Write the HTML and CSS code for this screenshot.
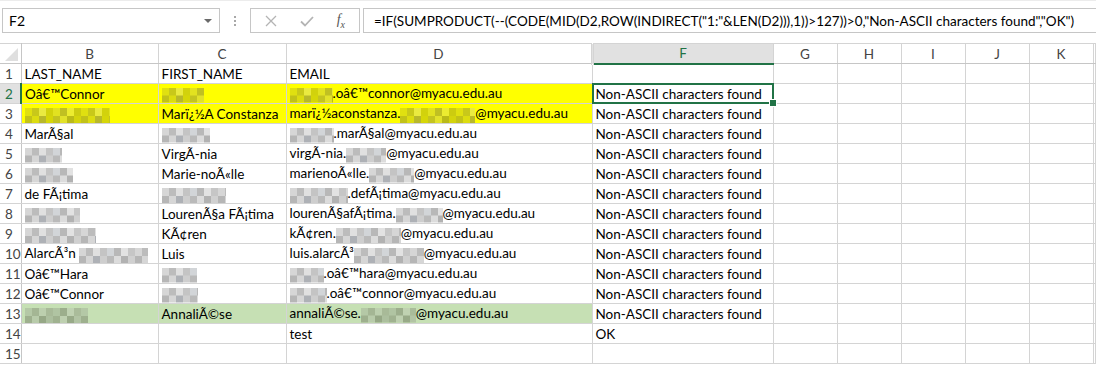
FILE: index.html
```html
<!DOCTYPE html>
<html lang="en">
<head>
    <meta charset="UTF-8">
    <title>Book1 - Excel</title>
    <link rel="stylesheet" href="styles.css">
</head>
<body>
    <div class="formula-row">
        <div class="name-box">
            <span>F2</span>
            <span class="caret"></span>
        </div>
        <div class="grip">
            <span></span><span></span><span></span>
        </div>
        <div class="fx-buttons">
            <svg width="12" height="12" viewBox="0 0 12 12"><path d="M1 1L11 11M11 1L1 11" stroke="#b4b4b4" stroke-width="1.3"/></svg>
            <svg width="14" height="12" viewBox="0 0 14 12"><path d="M1 6.5L5 10.5L13 2" stroke="#b4b4b4" stroke-width="1.8" fill="none"/></svg>
            <span class="fx">f<sub>x</sub></span>
        </div>
        <div class="formula">=IF(SUMPRODUCT(--(CODE(MID(D2,ROW(INDIRECT("1:"&amp;LEN(D2))),1))&gt;127))&gt;0,"Non-ASCII characters found","OK")</div>
    </div>

    <table class="sheet">
        <colgroup>
            <col style="width: 21px">
            <col style="width: 137px">
            <col style="width: 128px">
            <col style="width: 306px">
            <col style="width: 181px">
            <col style="width: 64px">
            <col style="width: 64px">
            <col style="width: 64px">
            <col style="width: 64px">
            <col style="width: 64px">
            <col>
        </colgroup>
        <thead>
            <tr>
                <th class="corner"><svg width="13" height="13" viewBox="0 0 13 13"><polygon points="13,0 13,13 0,13" fill="#dfdfdf"/></svg></th>
                <th>B</th>
                <th>C</th>
                <th class="hidden-after">D</th>
                <th class="col-active">F</th>
                <th>G</th>
                <th>H</th>
                <th>I</th>
                <th>J</th>
                <th>K</th>
                <th></th>
            </tr>
        </thead>
        <tbody>
            <tr>
                <td class="rh">1</td>
                <td>LAST_NAME</td><td>FIRST_NAME</td><td>EMAIL</td><td></td>
                <td></td><td></td><td></td><td></td><td></td><td></td>
            </tr>
            <tr class="yellow">
                <td class="rh row-active">2</td>
                <td>Oâ€™Connor</td>
                <td><span class="blur" style="width: 42px"></span></td>
                <td><span class="blur" style="width: 43px"></span>.oâ€™connor@myacu.edu.au</td>
                <td class="active">Non-ASCII characters found</td>
                <td></td><td></td><td></td><td></td><td></td><td></td>
            </tr>
            <tr class="yellow">
                <td class="rh">3</td>
                <td><span class="blur" style="width: 85px"></span></td>
                <td>Marï¿½A Constanza</td>
                <td>marï¿½aconstanza.<span class="blur" style="width: 75px"></span>@myacu.edu.au</td>
                <td>Non-ASCII characters found</td>
                <td></td><td></td><td></td><td></td><td></td><td></td>
            </tr>
            <tr>
                <td class="rh">4</td>
                <td>MarÃ§al</td>
                <td><span class="blur" style="width: 48px"></span></td>
                <td><span class="blur" style="width: 44px"></span>.marÃ§al@myacu.edu.au</td>
                <td>Non-ASCII characters found</td>
                <td></td><td></td><td></td><td></td><td></td><td></td>
            </tr>
            <tr>
                <td class="rh">5</td>
                <td><span class="blur" style="width: 37px"></span></td>
                <td>VirgÃ-nia</td>
                <td>virgÃ-nia.<span class="blur" style="width: 40px"></span>@myacu.edu.au</td>
                <td>Non-ASCII characters found</td>
                <td></td><td></td><td></td><td></td><td></td><td></td>
            </tr>
            <tr>
                <td class="rh">6</td>
                <td><span class="blur" style="width: 48px"></span></td>
                <td>Marie-noÃ«lle</td>
                <td>marienoÃ«lle.<span class="blur" style="width: 45px"></span>@myacu.edu.au</td>
                <td>Non-ASCII characters found</td>
                <td></td><td></td><td></td><td></td><td></td><td></td>
            </tr>
            <tr>
                <td class="rh">7</td>
                <td>de FÃ¡tima</td>
                <td><span class="blur" style="width: 64px"></span></td>
                <td><span class="blur" style="width: 58px"></span>.defÃ¡tima@myacu.edu.au</td>
                <td>Non-ASCII characters found</td>
                <td></td><td></td><td></td><td></td><td></td><td></td>
            </tr>
            <tr>
                <td class="rh">8</td>
                <td><span class="blur" style="width: 55px"></span></td>
                <td>LourenÃ§a FÃ¡tima</td>
                <td>lourenÃ§afÃ¡tima.<span class="blur" style="width: 47px"></span>@myacu.edu.au</td>
                <td>Non-ASCII characters found</td>
                <td></td><td></td><td></td><td></td><td></td><td></td>
            </tr>
            <tr>
                <td class="rh">9</td>
                <td><span class="blur" style="width: 71px"></span></td>
                <td>KÃ¢ren</td>
                <td>kÃ¢ren.<span class="blur" style="width: 65px"></span>@myacu.edu.au</td>
                <td>Non-ASCII characters found</td>
                <td></td><td></td><td></td><td></td><td></td><td></td>
            </tr>
            <tr>
                <td class="rh">10</td>
                <td>AlarcÃ³n <span class="blur" style="width: 69px"></span></td>
                <td>Luis</td>
                <td>luis.alarcÃ³<span class="blur" style="width: 70px"></span>@myacu.edu.au</td>
                <td>Non-ASCII characters found</td>
                <td></td><td></td><td></td><td></td><td></td><td></td>
            </tr>
            <tr>
                <td class="rh">11</td>
                <td>Oâ€™Hara</td>
                <td><span class="blur" style="width: 35px"></span></td>
                <td><span class="blur" style="width: 34px"></span>.oâ€™hara@myacu.edu.au</td>
                <td>Non-ASCII characters found</td>
                <td></td><td></td><td></td><td></td><td></td><td></td>
            </tr>
            <tr>
                <td class="rh">12</td>
                <td>Oâ€™Connor</td>
                <td><span class="blur" style="width: 36px"></span></td>
                <td><span class="blur" style="width: 37px"></span>.oâ€™connor@myacu.edu.au</td>
                <td>Non-ASCII characters found</td>
                <td></td><td></td><td></td><td></td><td></td><td></td>
            </tr>
            <tr class="green">
                <td class="rh">13</td>
                <td><span class="blur" style="width: 63px"></span></td>
                <td>AnnaliÃ©se</td>
                <td>annaliÃ©se.<span class="blur" style="width: 55px"></span>@myacu.edu.au</td>
                <td>Non-ASCII characters found</td>
                <td></td><td></td><td></td><td></td><td></td><td></td>
            </tr>
            <tr>
                <td class="rh">14</td>
                <td></td><td></td><td>test</td><td>OK</td>
                <td></td><td></td><td></td><td></td><td></td><td></td>
            </tr>
            <tr>
                <td class="rh">15</td>
                <td></td><td></td><td></td><td></td>
                <td></td><td></td><td></td><td></td><td></td><td></td>
            </tr>
        </tbody>
    </table>
</body>
</html>
```

FILE: styles.css
```css
* {
    margin: 0;
    padding: 0;
    box-sizing: border-box;
}

:root {
    --grid-color: #d4d4d4;
    --header-line: #c6c6c6;
    --excel-green: #217346;
    --text-color: #000;
}

body {
    width: 1096px;
    height: 368px;
    overflow: hidden;
    background: #fff;
    font-family: 'Lato', 'Open Sans', sans-serif;
    font-size: 13.5px;
    color: var(--text-color);
    border-top: 1px solid #ececec;
}

/* formula bar */

.formula-row {
    display: flex;
    align-items: center;
    height: 42px;
    padding-top: 7px;
    padding-bottom: 10px;
    padding-left: 2px;
}

.name-box {
    width: 218px;
    height: 25px;
    border: 1px solid var(--header-line);
    display: flex;
    align-items: center;
    justify-content: space-between;
    padding: 0 7px 0 6px;
    font-size: 14px;
}

.caret {
    width: 0;
    height: 0;
    border-left: 4px solid transparent;
    border-right: 4px solid transparent;
    border-top: 4px solid #6a6a6a;
}

.grip {
    width: 30px;
    display: flex;
    flex-direction: column;
    align-items: center;
    gap: 2px;
}

.grip span {
    width: 2px;
    height: 2px;
    background: #a8a8a8;
}

.fx-buttons {
    width: 110px;
    height: 25px;
    border: 1px solid var(--header-line);
    display: flex;
    align-items: center;
    justify-content: space-between;
    padding: 0 14px 0 14px;
}

.fx {
    font-family: 'Liberation Serif', serif;
    font-style: italic;
    font-size: 14px;
    color: #555;
}

.fx sub {
    font-size: 10px;
}

.formula {
    flex: 1;
    height: 25px;
    margin-left: 3px;
    border: 1px solid var(--header-line);
    border-right: none;
    padding-left: 10px;
    display: flex;
    align-items: center;
    font-size: 13.5px;
    white-space: nowrap;
    overflow: hidden;
}

/* grid */

.sheet {
    border-collapse: collapse;
    table-layout: fixed;
    width: 1096px;
}

.sheet th {
    height: 20px;
    font-weight: normal;
    color: #444;
    text-align: center;
    border-right: 1px solid var(--grid-color);
    border-top: 1px solid var(--grid-color);
    border-bottom: 1px solid var(--header-line);
    background: #fff;
}

.sheet th.corner {
    text-align: right;
    vertical-align: bottom;
    padding: 0 3px 2px 0;
    border-right: 1px solid var(--header-line);
}

.sheet th.corner svg {
    display: block;
    margin-left: auto;
}

.sheet th.hidden-after {
    border-right: 3px double var(--grid-color);
}

.sheet th.col-active {
    background: #e1e1e1;
    color: var(--excel-green);
    border-bottom: 2px solid var(--excel-green);
}

.sheet td {
    height: 20px;
    padding: 0 3px;
    white-space: nowrap;
    overflow: hidden;
    border-right: 1px solid var(--grid-color);
    border-bottom: 1px solid var(--grid-color);
    vertical-align: middle;
    line-height: 18px;
}

.sheet td.rh {
    text-align: left;
    padding-left: 5px;
    padding-right: 0;
    color: #444;
    border-right: 1px solid var(--header-line);
}

.sheet td.row-active {
    background: #e1e1e1;
    color: var(--excel-green);
    border-right: 2px solid var(--excel-green);
}

.yellow td:nth-child(n+2):nth-child(-n+4) {
    background: #ffff00;
}

.green td:nth-child(n+2):nth-child(-n+4) {
    background: #c6e0b4;
}

.sheet td.active {
    position: relative;
    overflow: visible;
}

.sheet td.active::after {
    content: '';
    position: absolute;
    left: -1px;
    top: -1px;
    right: -1px;
    bottom: -1px;
    border: 2px solid var(--excel-green);
}

.sheet td.active::before {
    content: '';
    position: absolute;
    right: -4px;
    bottom: -4px;
    width: 6px;
    height: 6px;
    background: var(--excel-green);
    border: 1px solid #fff;
    z-index: 1;
}

/* pixelated redaction */

.blur {
    display: inline-block;
    height: 15px;
    vertical-align: middle;
    background:
        linear-gradient(90deg, #d6d6d6 0 7px, #bcbcbc 7px 14px, #e0e0e0 14px 21px, #c4c4c4 21px 28px, #d2d5d8 28px 35px, #b8b8b8 35px 42px, #e2e2e2 42px 49px, #c6c6c6 49px 56px) left top / 56px 50% repeat-x,
        linear-gradient(90deg, #b6b6b6 0 7px, #d6d6d6 7px 14px, #aeb1b6 14px 21px, #cecece 21px 28px, #bababa 28px 35px, #dcdcdc 35px 42px, #b2b2b2 42px 49px, #d0d0d0 49px 56px) left bottom / 56px 50% repeat-x;
}

.yellow .blur {
    background:
        linear-gradient(90deg, #e0e010 0 7px, #c8c81a 7px 14px, #eaea40 14px 21px, #d2d20c 21px 28px, #e2e220 28px 35px, #c0c022 35px 42px, #ecec30 42px 49px, #cccc10 49px 56px) left top / 56px 50% repeat-x,
        linear-gradient(90deg, #c2c218 0 7px, #dcdc10 7px 14px, #b8b82a 14px 21px, #d6d608 21px 28px, #c4c420 28px 35px, #e2e22a 35px 42px, #baba18 42px 49px, #d4d40c 49px 56px) left bottom / 56px 50% repeat-x;
}

.green .blur {
    background:
        linear-gradient(90deg, #b4c8a6 0 7px, #a4b694 7px 14px, #bccfae 14px 21px, #a8ba98 21px 28px, #b0c4a2 28px 35px, #9cae8c 35px 42px, #c0d2b2 42px 49px, #aabc9a 49px 56px) left top / 56px 50% repeat-x,
        linear-gradient(90deg, #9eb08e 0 7px, #b8cbaa 7px 14px, #96a886 14px 21px, #acbf9e 21px 28px, #a0b290 28px 35px, #bed0b0 35px 42px, #98aa88 42px 49px, #b2c4a4 49px 56px) left bottom / 56px 50% repeat-x;
}
```
